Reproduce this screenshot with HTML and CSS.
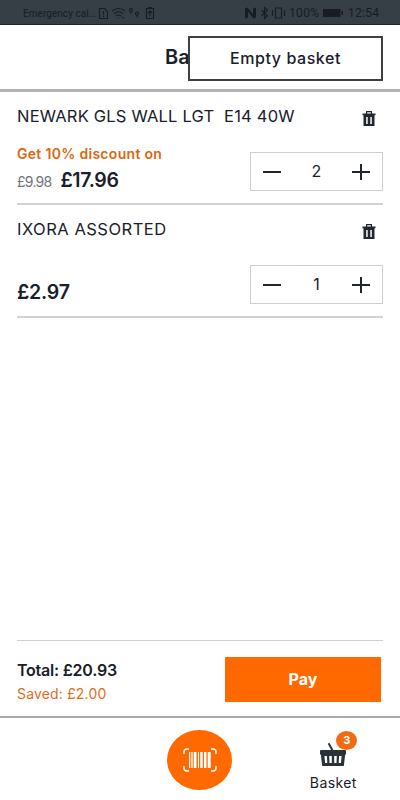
FILE: index.html
```html
<!DOCTYPE html>
<html lang="en">
<head>
<meta charset="utf-8">
<title>Basket</title>
<link rel="stylesheet" href="styles.css">
</head>
<body>
<div class="screen">
  <div class="status">
    <span class="carrier">Emergency cal...</span>
    <svg class="status-left" width="60" height="14" viewBox="0 0 60 14">
      <path d="M3.500 2.500h5l3 3v7h-8z M7.500 5v3.500 M7.500 9.500v1.500" />
      <path d="M16 5q6.500-5 13 0 M18 7.500q4.500-3.500 9 0 M20 10q2.500-2 5 0 M22.500 11.500v1M26 11l2 1"/>
      <circle cx="35" cy="4" r="1.500"/><path d="M35 5v3"/><circle cx="41" cy="7.500" r="1.500"/><path d="M41 8.500v3"/>
      <path d="M50.500 2.500h7v10h-7z M54 10.500v-5M52 7l2-2 2 2M52 1.500h4"/>
    </svg>
    <svg class="status-right" width="44" height="14" viewBox="0 0 44 14">
      <path class="solid" d="M1 2.500l2.500-1L9 8.500V2.500l3-1v10l-2.500 1L4 5.500v6l-3 1z"/>
      <path d="M17.500 4l6 6-3 2.500v-11l3 2.500-6 6"/>
      <path d="M31.500 2h6v10h-6z M28.500 4v6 M40.500 4v6"/>
    </svg>
    <span class="percent">100%</span>
    <svg class="battery" width="22" height="10" viewBox="0 0 22 10"><path class="solid" d="M1 1h17.500v8H1zM19.500 3h1.500v4h-1.500z"/></svg>
    <span class="clock">12:54</span>
  </div>
  <header class="header">
    <h1>Basket</h1>
    <button class="empty">Empty basket</button>
  </header>
  <main class="items">
    <section class="item">
      <div class="row name-row"><span class="name">NEWARK GLS WALL LGT&nbsp; E14 40W</span>
        <svg class="trash" width="14" height="16" viewBox="0 0 14 16"><path fill-rule="evenodd" d="M4 0h6v2.500h3.500v1.800h-1V15h-11V4.300h-1V2.500H4zM5.200 1.200v1.300h3.600V1.200zM4.200 6v7h1.500V6zm4.100 0v7h1.500V6z"/></svg>
      </div>
      <div class="row detail">
        <div class="prices"><div class="discount">Get 10% discount on</div><div class="price-line price-line-offer"><span class="old">£9.98</span><span class="price">£17.96</span></div></div>
        <div class="stepper"><svg width="18" height="18" viewBox="0 0 18 18"><path d="M0 9h18"/></svg><span>2</span><svg width="18" height="18" viewBox="0 0 18 18"><path d="M0 9h18M9 1v16"/></svg></div>
      </div>
    </section>
    <section class="item">
      <div class="row name-row"><span class="name name-short">IXORA ASSORTED</span>
        <svg class="trash" width="14" height="16" viewBox="0 0 14 16"><path fill-rule="evenodd" d="M4 0h6v2.500h3.500v1.800h-1V15h-11V4.300h-1V2.500H4zM5.200 1.200v1.300h3.600V1.200zM4.200 6v7h1.500V6zm4.100 0v7h1.500V6z"/></svg>
      </div>
      <div class="row detail">
        <div class="prices"><div class="price-line"><span class="price price-short">£2.97</span></div></div>
        <div class="stepper"><svg width="18" height="18" viewBox="0 0 18 18"><path d="M0 9h18"/></svg><span>1</span><svg width="18" height="18" viewBox="0 0 18 18"><path d="M0 9h18M9 1v16"/></svg></div>
      </div>
    </section>
  </main>
  <section class="summary">
    <div><div class="total">Total: £20.93</div><div class="saved">Saved: £2.00</div></div>
    <button class="pay">Pay</button>
  </section>
  <nav class="nav">
    <div class="scan">
      <svg width="34" height="24" viewBox="0 0 34 24"><path class="frame" d="M6 1H4Q1 1 1 4v2M28 1h2q3 0 3 3v2M6 23H4q-3 0-3-3v-2M28 23h2q3 0 3-3v-2"/><path class="bars" d="M6 4h1.200v16H6zM8.200 4h1.500v16H8.200zM10.700 4h2.800v16h-2.800zM15 4h1v16h-1zM17.300 4h2.400v16h-2.400zM21 4h2.400v16H21zM24.700 4h3v16h-3z"/></svg>
    </div>
    <div class="tab">
      <div class="basket-icon"><svg width="28" height="24" viewBox="0 0 28 24"><path class="handle" d="M10 1l5 9"/><path fill-rule="evenodd" d="M2 7h24q1 0 1 1v3.500h-.8L24.800 23H3.200L1.800 11.500H1V8q0-1 1-1zM5.400 13l.7 7h2.200l-.4-7zm4.800 0 .3 7h2.300v-7zm5 0v7h2.300l.3-7zm4.900 0-.4 7h2.200l.7-7z"/></svg><span class="badge">3</span></div>
      <span class="tab-label">Basket</span>
    </div>
  </nav>
</div>
</body>
</html>
```
FILE: styles.css
```css
* { box-sizing: border-box; }
body { margin: 0; background: #fff; color: #18202a; font-family: "Inter", "Liberation Sans", sans-serif; }
button { font-family: inherit; padding: 0; }
svg { display: block; flex: none; }
span, div, h1 { white-space: nowrap; }
.screen { width: 400px; height: 800px; display: flex; flex-direction: column; overflow: hidden; }
.status { height: 25px; flex: none; background: #363e46; border-bottom: 1px solid #1e242a; display: flex; align-items: center; padding: 2px 0 0 23px; color: #171d23; font-family: Roboto, sans-serif; }
.status svg { fill: none; stroke: #171d23; stroke-width: 1.1; }
.status .solid { fill: #171d23; stroke: none; }
.carrier { font-size: 10px; width: 73px; flex: none; letter-spacing: .05px; }
.status-right { margin-left: 88px; }
.percent { font-size: 12px; width: 33px; flex: none; margin-left: 1px; letter-spacing: .35px; }
.battery { margin-right: 4px; }
.clock { font-size: 12px; letter-spacing: .3px; }
.header { height: 67px; flex: none; border-bottom: 3px solid #b2b2b2; display: flex; align-items: center; justify-content: center; position: relative; }
h1 { margin: 0; font-size: 20px; font-weight: 600; width: 70px; }
.empty { position: absolute; left: 188px; top: 11px; width: 195px; height: 45px; background: #fff; border: 2px solid #3d4044; color: #18202a; font-size: 16px; line-height: 20px; font-weight: 500; letter-spacing: .55px; padding-bottom: 1px; }
.items { flex: 1; padding: 0 17px; }
.item { height: 113px; border-bottom: 2px solid #d2d2d2; }
.row { display: flex; justify-content: space-between; }
.name-row { height: 60px; padding: 14px 7px 0 0; }
.name { font-size: 16.5px; line-height: 21px; letter-spacing: .2px; }
.name-short { letter-spacing: .5px; }
.trash { margin-top: 5px; fill: #20272e; }
.detail { height: 38px; }
.prices { display: flex; flex-direction: column; justify-content: flex-end; margin-top: -7px; height: 48px; }
.discount { font-size: 14px; line-height: 20px; font-weight: 600; color: #db670f; letter-spacing: .3px; }
.price-line { display: flex; align-items: baseline; gap: 9px; line-height: 28px; }
.price-line-offer { margin: 2px 0 -2px; }
.prices:has(.discount) { margin-top: -6px; }
.old { font-size: 14px; color: #70757a; letter-spacing: -.75px; }
.price { font-size: 19.5px; font-weight: 600; letter-spacing: -.35px; }
.price-short { letter-spacing: -.2px; }
.stepper { width: 133px; height: 39px; flex: none; border: 1px solid #cfcfcf; display: flex; align-items: center; justify-content: space-between; padding: 0 12px; font-size: 16px; }
.stepper span { margin-top: -1px; }
.stepper svg { stroke: #20262c; stroke-width: 2; fill: none; }
.summary { height: 76px; flex: none; margin: 0 17px; border-top: 1px solid #cfd0d4; display: flex; justify-content: space-between; padding: 16px 2px 0 0; }
.total { font-size: 16px; line-height: 24px; font-weight: 600; letter-spacing: -.22px; margin-top: 1px; }
.saved { font-size: 14px; line-height: 23px; color: #e06c18; letter-spacing: .17px; }
.pay { width: 156px; height: 45px; border: 0; background: #ff6900; color: #fff; font-size: 16px; font-weight: 700; padding-bottom: 2px; }
.nav { height: 84px; flex: none; border-top: 2px solid #aaa; display: grid; grid-template-columns: 1fr 1fr 1fr; }
.scan { width: 65px; height: 60px; border-radius: 50%; background: #ff6900; display: flex; align-items: center; justify-content: center; grid-column: 2; justify-self: center; margin-top: 12px; }
.frame { fill: none; stroke: #fff; stroke-width: 1.5; }
.bars { fill: #fff; }
.tab { display: flex; flex-direction: column; align-items: center; padding-top: 25px; }
.basket-icon { position: relative; fill: #2b3339; }
.handle { stroke: #2b3339; stroke-width: 2; stroke-linecap: round; }
.badge { position: absolute; left: 17px; top: -12px; width: 21px; height: 19px; border-radius: 50%; background: #f26b13; color: #fff; font-size: 11px; font-weight: 700; line-height: 19px; text-align: center; }
.tab-label { font-size: 14px; line-height: 20px; margin-top: 6px; letter-spacing: .4px; }
```
